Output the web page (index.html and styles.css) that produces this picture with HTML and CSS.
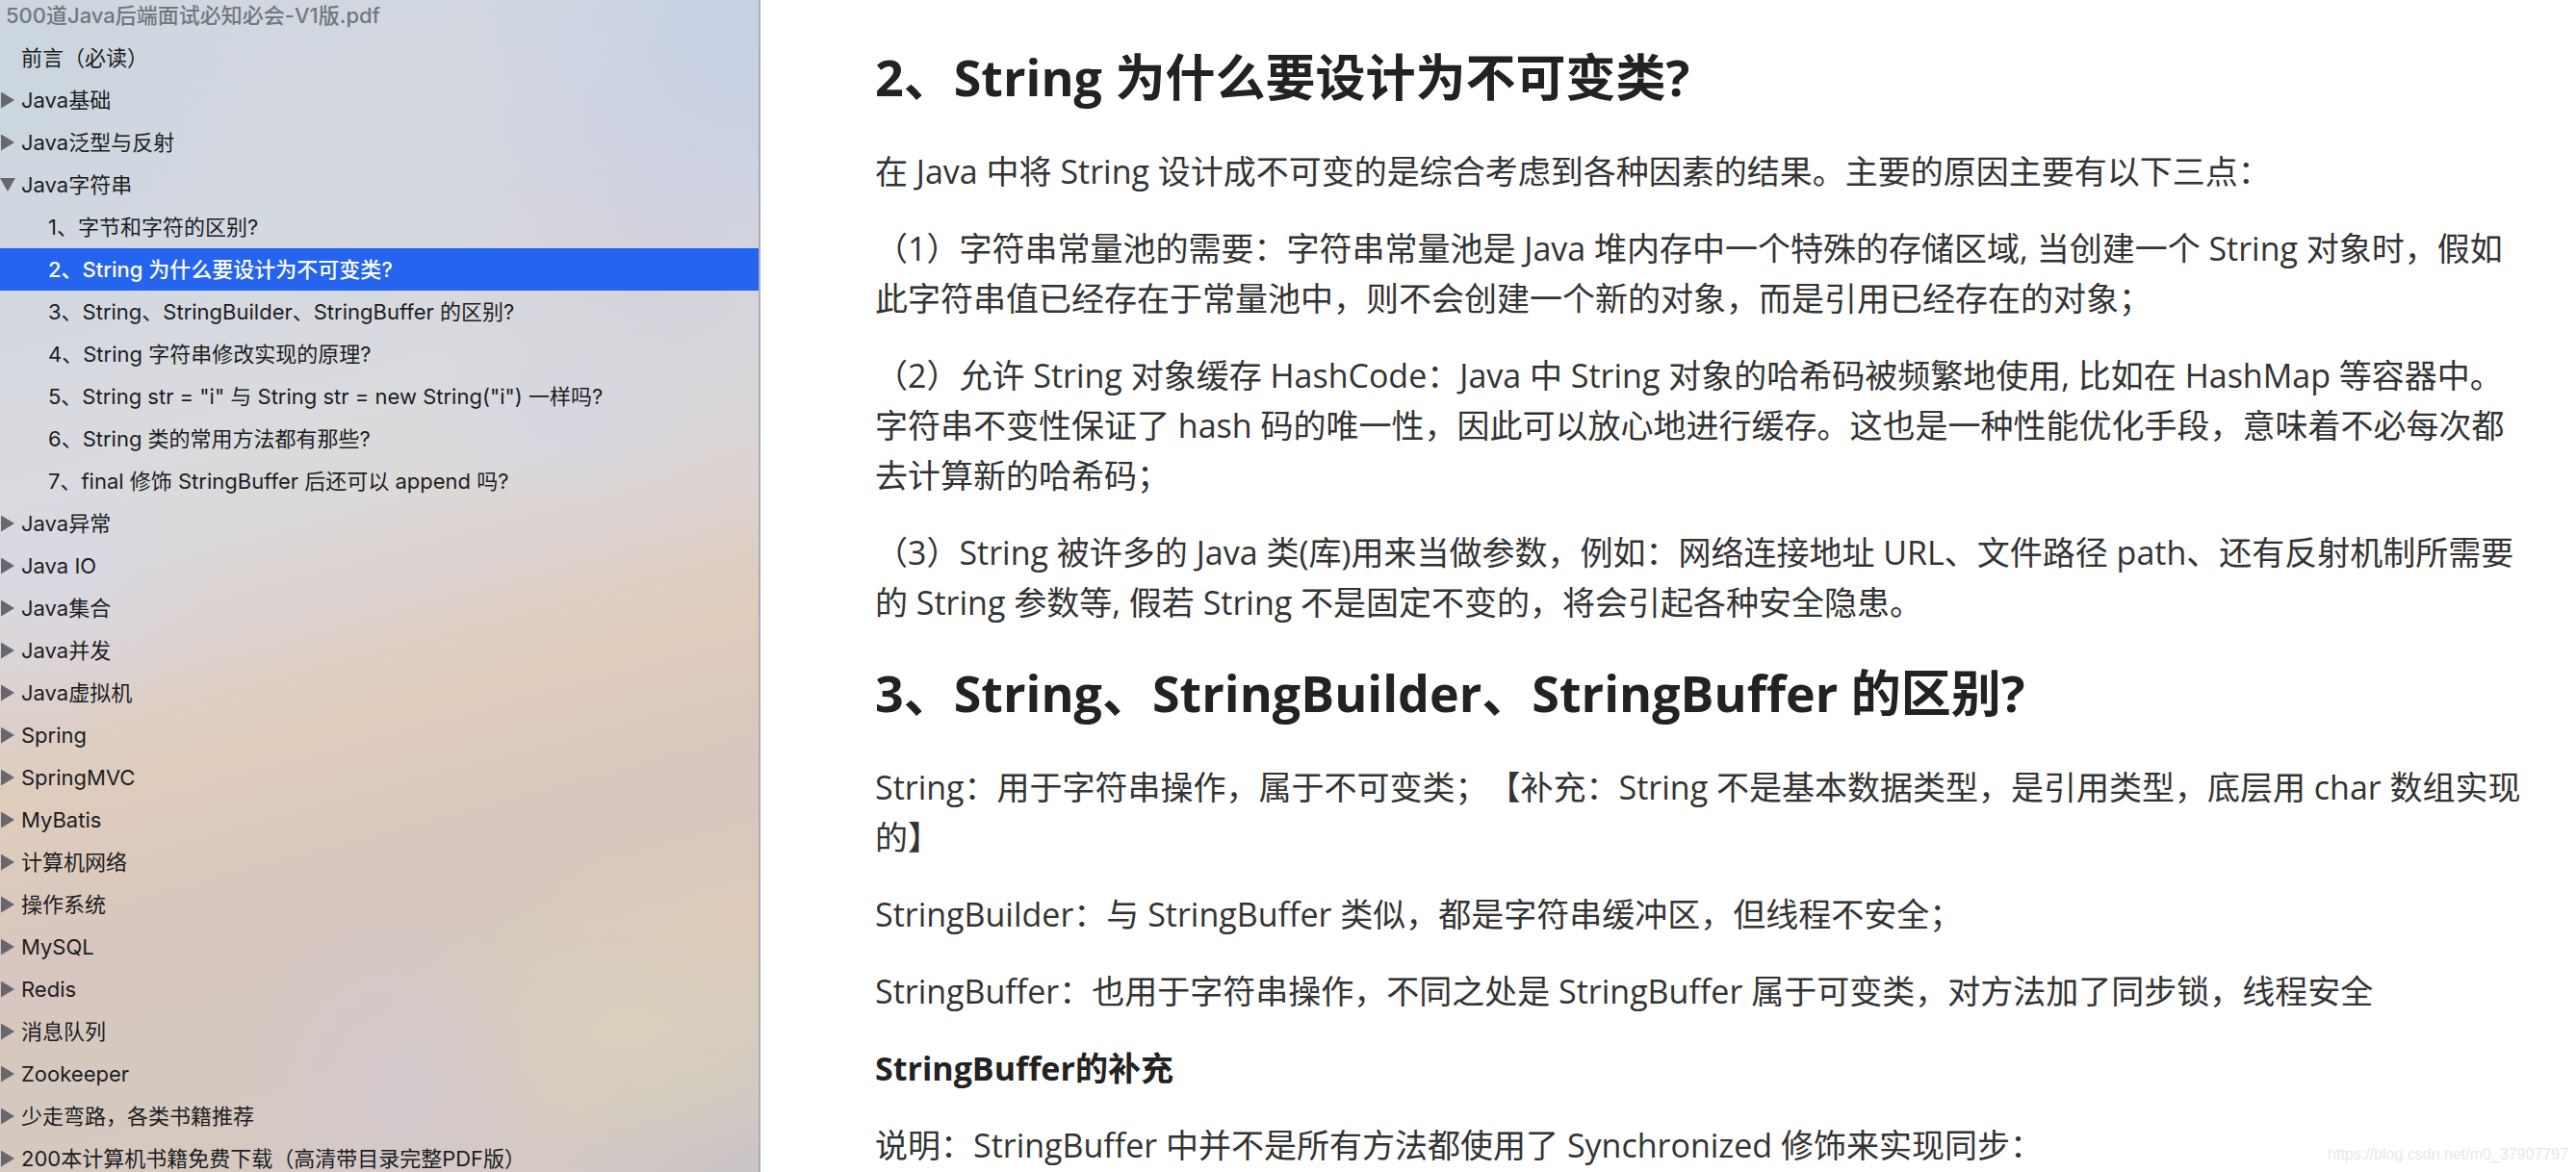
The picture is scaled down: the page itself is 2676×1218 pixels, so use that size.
FILE: index.html
```html
<!DOCTYPE html>
<html lang="zh-CN">
<head>
<meta charset="utf-8">
<title>500道Java后端面试必知必会-V1版.pdf</title>
<link rel="stylesheet" href="styles.css">
</head>
<body>
<div class="viewer">
  <nav class="sidebar" aria-label="目录">
    <h1 class="file-name">500道Java后端面试必知必会-V1版.pdf</h1>
    <ul class="outline">
      <li><a class="item" href="#"><span class="marker"></span>前言（必读）</a></li>
      <li><a class="item" href="#"><span class="marker closed"></span>Java基础</a></li>
      <li><a class="item" href="#"><span class="marker closed"></span>Java泛型与反射</a></li>
      <li><a class="item" href="#"><span class="marker open"></span>Java字符串</a>
        <ul class="outline nested">
          <li><a class="item" href="#">1、字节和字符的区别?</a></li>
          <li><a class="item selected" href="#immutable" aria-current="true">2、String 为什么要设计为不可变类?</a></li>
          <li><a class="item" href="#builders">3、String、StringBuilder、StringBuffer 的区别?</a></li>
          <li><a class="item" href="#">4、String 字符串修改实现的原理?</a></li>
          <li><a class="item" href="#">5、String str = "i" 与 String str = new String("i") 一样吗?</a></li>
          <li><a class="item" href="#">6、String 类的常用方法都有那些?</a></li>
          <li><a class="item" href="#">7、final 修饰 StringBuffer 后还可以 append 吗?</a></li>
        </ul>
      </li>
      <li><a class="item" href="#"><span class="marker closed"></span>Java异常</a></li>
      <li><a class="item" href="#"><span class="marker closed"></span>Java IO</a></li>
      <li><a class="item" href="#"><span class="marker closed"></span>Java集合</a></li>
      <li><a class="item" href="#"><span class="marker closed"></span>Java并发</a></li>
      <li><a class="item" href="#"><span class="marker closed"></span>Java虚拟机</a></li>
      <li><a class="item" href="#"><span class="marker closed"></span>Spring</a></li>
      <li><a class="item" href="#"><span class="marker closed"></span>SpringMVC</a></li>
      <li><a class="item" href="#"><span class="marker closed"></span>MyBatis</a></li>
      <li><a class="item" href="#"><span class="marker closed"></span>计算机网络</a></li>
      <li><a class="item" href="#"><span class="marker closed"></span>操作系统</a></li>
      <li><a class="item" href="#"><span class="marker closed"></span>MySQL</a></li>
      <li><a class="item" href="#"><span class="marker closed"></span>Redis</a></li>
      <li><a class="item" href="#"><span class="marker closed"></span>消息队列</a></li>
      <li><a class="item" href="#"><span class="marker closed"></span>Zookeeper</a></li>
      <li><a class="item" href="#"><span class="marker closed"></span>少走弯路，各类书籍推荐</a></li>
      <li><a class="item" href="#"><span class="marker closed"></span>200本计算机书籍免费下载（高清带目录完整PDF版）</a></li>
    </ul>
  </nav>
  <main class="page">
    <h2 id="immutable">2、String 为什么要设计为不可变类?</h2>
    <p>在 Java 中将 String 设计成不可变的是综合考虑到各种因素的结果。主要的原因主要有以下三点：</p>
    <p>（1）字符串常量池的需要：字符串常量池是 Java 堆内存中一个特殊的存储区域, 当创建一个 String 对象时，假如此字符串值已经存在于常量池中，则不会创建一个新的对象，而是引用已经存在的对象；</p>
    <p>（2）允许 String 对象缓存 HashCode：Java 中 String 对象的哈希码被频繁地使用, 比如在 HashMap 等容器中。字符串不变性保证了 hash 码的唯一性，因此可以放心地进行缓存。这也是一种性能优化手段，意味着不必每次都去计算新的哈希码；</p>
    <p>（3）String 被许多的 Java 类(库)用来当做参数，例如：网络连接地址 URL、文件路径 path、还有反射机制所需要的 String 参数等, 假若 String 不是固定不变的，将会引起各种安全隐患。</p>
    <h2 id="builders">3、String、StringBuilder、StringBuffer 的区别?</h2>
    <p>String：用于字符串操作，属于不可变类；【补充：String 不是基本数据类型，是引用类型，底层用 char 数组实现的】</p>
    <p>StringBuilder：与 StringBuffer 类似，都是字符串缓冲区，但线程不安全；</p>
    <p>StringBuffer：也用于字符串操作，不同之处是 StringBuffer 属于可变类，对方法加了同步锁，线程安全</p>
    <p><strong>StringBuffer的补充</strong></p>
    <p>说明：StringBuffer 中并不是所有方法都使用了 Synchronized 修饰来实现同步：</p>
  </main>
  <span class="watermark">https://blog.csdn.net/m0_37907797</span>
</div>
</body>
</html>
```
FILE: styles.css
```css
* { box-sizing: border-box; }
body { margin: 0; background: #fff; text-spacing-trim: space-all; }
.viewer { position: relative; display: flex; height: 100vh; overflow: hidden; }
.sidebar {
  flex: 0 0 790px;
  border-right: 2px solid #a9adb5;
  overflow: hidden;
  font: 22px/44px Inter, "Noto Sans CJK SC", sans-serif;
  color: #1c1d22;
  background:
    radial-gradient(circle 260px at 0 90px, #c8d5dfaa, #c8d5df00),
    radial-gradient(circle 300px at 790px 20px, #c4d0e5ee, #c4d0e500),
    radial-gradient(circle 260px at 690px 250px, #d2cddaaa, #d2cdda00),
    radial-gradient(ellipse 160px 90px at 580px 440px, #d6d8e5aa, #d6d8e500),
    radial-gradient(circle 160px at 60px 590px, #d9d8e6bb, #d9d8e600),
    radial-gradient(ellipse 180px 200px at 410px 1130px, #d4c9cfdd, #d4c9cf00),
    radial-gradient(ellipse 260px 150px at 650px 1070px, #d8d0bbdd, #d8d0bb00),
    radial-gradient(ellipse 260px 130px at 770px 960px, #e0cbb9dd, #e0cbb900),
    radial-gradient(ellipse 240px 160px at 790px 1218px, #cac4c5, #cac4c500),
    linear-gradient(165deg, #d0d7e0 0%, #d4d8e1 22%, #dadbde 36%, #dbd9d9 43%, #dcd2cf 50%, #dfccbc 59%, #dccabe 64%, #d8c5bf 71%, #d5c8bf 77%, #d6c9c0 88%, #d5cac7 100%);
}
.file-name { margin: -6px 0 0; padding-left: 6px; font-size: 22px; font-weight: 500; color: #73777f; white-space: nowrap; }
.outline { list-style: none; margin: 0; padding: 0; }
.item { display: flex; align-items: center; height: 44px; color: inherit; text-decoration: none; white-space: pre; }
.marker { flex: 0 0 22px; }
.marker::before { content: ""; display: block; width: 15px; height: 17px; background: #67676d; }
.marker:not(.closed):not(.open)::before { background: none; }
.closed::before { clip-path: polygon(1px 0, 100% 50%, 1px 100%); }
.open::before { width: 16px; height: 14px; clip-path: polygon(0 0, 100% 0, 50% 100%); }
.nested .item { padding-left: 50px; }
.nested .selected { background: #2464ee; color: #fff; font-weight: 500; }
.page {
  flex: 1;
  min-width: 0;
  padding: 44px 50px 0 119px;
  font: 34px/52px "Open Sans", "Noto Sans CJK SC", sans-serif;
  color: #333;
}
.page h2 { margin: 32px 0 36px; font-size: 52px; line-height: 72px; font-weight: 700; color: #222; }
.page h2:first-child { margin-top: 0; }
.page p { margin: 0 0 28px; }
.page strong { color: #222; }
.watermark { position: absolute; right: 8px; bottom: 6px; font: 16px/24px "Liberation Sans", sans-serif; color: #e8e8e8; }
```
